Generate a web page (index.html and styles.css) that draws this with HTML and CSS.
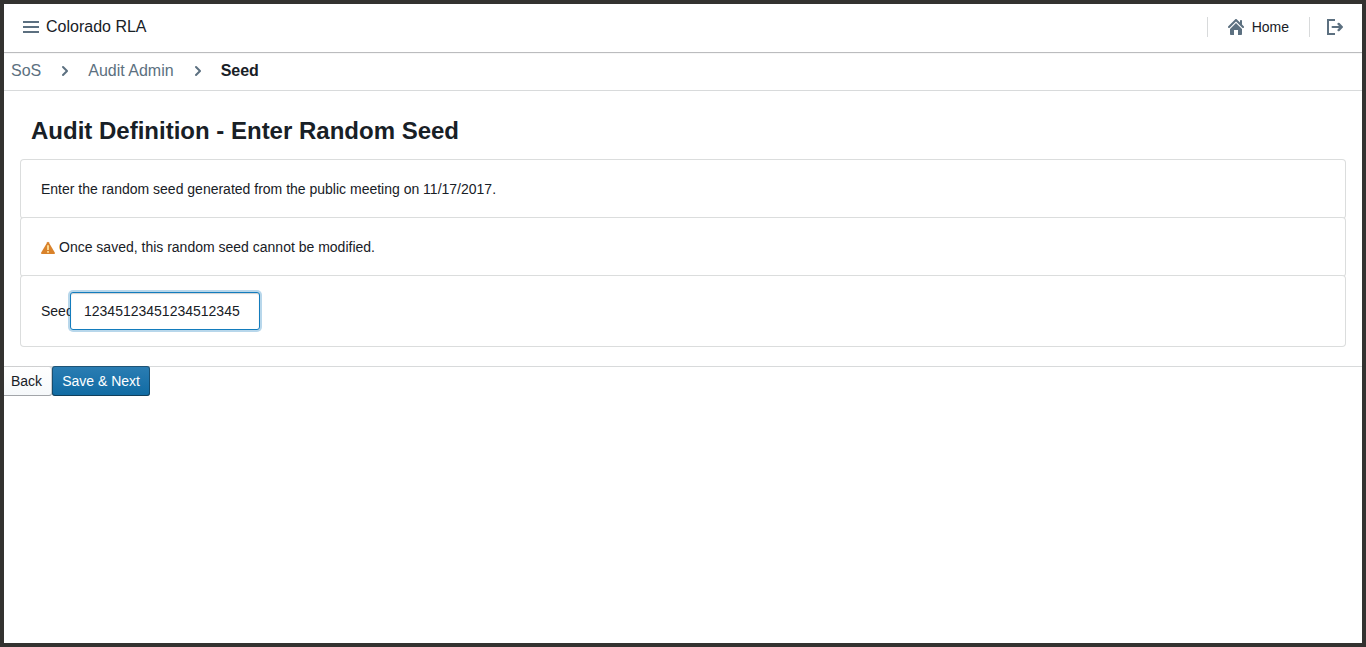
FILE: index.html
```html
<!DOCTYPE html>
<html lang="en">
<head>
<meta charset="utf-8">
<meta name="viewport" content="width=device-width, initial-scale=1">
<title>Colorado RLA</title>
<link rel="stylesheet" href="styles.css">
</head>
<body>
<header class="navbar">
  <div class="navbar-group">
    <button class="icon-button" type="button" aria-label="Menu">
      <svg class="icon" width="16" height="16" viewBox="0 0 16 16" aria-hidden="true"><path d="M0 2h16v2H0zM0 7h16v2H0zM0 12h16v2H0z"/></svg>
    </button>
    <span class="brand">Colorado RLA</span>
  </div>
  <div class="navbar-group">
    <span class="divider"></span>
    <a class="nav-link" href="#">
      <svg class="icon" width="16" height="16" viewBox="0 0 16 16" aria-hidden="true"><path d="M2 10v5c0 .55.45 1 1 1h3v-5h4v5h3c.55 0 1-.45 1-1v-5L8 4l-6 6zm13.71-2.71L14 5.590V2c0-.55-.45-1-1-1s-1 .45-1 1v1.590L8.710.290C8.530.110 8.280 0 8 0s-.53.110-.71.290l-7 7a1.003 1.003 0 0 0 1.420 1.420L8 2.410l6.290 6.290c.18.190.430.300.71.300a1.003 1.003 0 0 0 .71-1.710z"/></svg>
      Home
    </a>
    <span class="divider"></span>
    <button class="icon-button" type="button" aria-label="Log out">
      <svg class="icon" width="16" height="16" viewBox="0 0 16 16" aria-hidden="true"><path d="M0 0h8v2H2v12h6v2H0zM5.500 7h6.500l-1.200-1.200a1.200 1.200 0 0 1 1.700-1.700l3.100 3.100a1.100 1.100 0 0 1 0 1.600l-3.100 3.100a1.200 1.200 0 0 1-1.700-1.700L12 9H5.500a1 1 0 0 1 0-2z"/></svg>
    </button>
  </div>
</header>
<nav aria-label="Breadcrumb">
  <ol class="breadcrumbs">
    <li><a href="#">SoS</a></li>
    <li class="chevron" aria-hidden="true"><svg class="icon" width="16" height="16" viewBox="0 0 16 16"><path d="M10.710 7.290l-4-4a1.003 1.003 0 0 0-1.420 1.420L8.590 8 5.300 11.290c-.19.180-.3.430-.3.710a1.003 1.003 0 0 0 1.710.710l4-4c.18-.18.290-.430.290-.710 0-.28-.11-.53-.29-.71z"/></svg></li>
    <li><a href="#">Audit Admin</a></li>
    <li class="chevron" aria-hidden="true"><svg class="icon" width="16" height="16" viewBox="0 0 16 16"><path d="M10.710 7.290l-4-4a1.003 1.003 0 0 0-1.420 1.420L8.590 8 5.300 11.290c-.19.180-.3.430-.3.710a1.003 1.003 0 0 0 1.710.710l4-4c.18-.18.290-.430.290-.710 0-.28-.11-.53-.29-.71z"/></svg></li>
    <li class="current" aria-current="page">Seed</li>
  </ol>
</nav>
<main class="content">
  <h1>Audit Definition - Enter Random Seed</h1>
  <div class="card">Enter the random seed generated from the public meeting on 11/17/2017.</div>
  <div class="card warning">
    <svg class="warning-icon" width="14" height="14" viewBox="0 0 16 16" aria-hidden="true"><path class="warning-shape" d="M7.200 2.500q.8-1 1.600 0l7.100 12.200q.2 1.300-.9 1.300H1Q-.1 16 .1 14.700z"/><path class="warning-mark" d="M7 6h2v5.500H7zM7 12.500h2v2H7z"/></svg>
    <span>Once saved, this random seed cannot be modified.</span>
  </div>
  <div class="card field">
    <label for="seed">Seed</label>
    <input id="seed" type="text" value="12345123451234512345">
  </div>
</main>
<footer class="actions">
  <button class="button" type="button">Back</button>
  <button class="button primary" type="button">Save &amp; Next</button>
</footer>
<div class="frame"></div>
</body>
</html>
```
FILE: styles.css
```css
* {
  box-sizing: border-box;
}

body {
  margin: 0;
  min-height: 100vh;
  background: #fff;
  color: #182026;
  font: 14px/18px "Liberation Sans", Arial, sans-serif;
}

button,
input {
  margin: 0;
  color: inherit;
  font: inherit;
}

.frame {
  position: fixed;
  inset: 0;
  border: 4px solid #333230;
  pointer-events: none;
}

.icon {
  display: block;
  flex: none;
  fill: #5c7080;
}

.navbar {
  display: flex;
  justify-content: space-between;
  height: 52px;
  padding: 4px 16px 2px;
  box-shadow: 0 0 0 1px rgba(16, 22, 26, 0.1), 0 1px 1px rgba(16, 22, 26, 0.2);
}

.navbar-group {
  display: flex;
  align-items: center;
}

.icon-button {
  padding: 7px;
  border: 0;
  background: none;
}

.brand {
  font-size: 16px;
  line-height: 20px;
}

.divider {
  width: 1px;
  height: 20px;
  background: #d8dadb;
}

.divider:last-of-type {
  margin-right: 10px;
}

.nav-link {
  display: flex;
  align-items: center;
  gap: 8px;
  padding: 0 20px;
  color: inherit;
  text-decoration: none;
}

.breadcrumbs {
  display: flex;
  align-items: center;
  height: 39px;
  margin: 0;
  padding: 0 11px;
  border-bottom: 1px solid #d8dadb;
  font-size: 16px;
  line-height: 20px;
  list-style: none;
}

.breadcrumbs a {
  color: #5c7080;
  text-decoration: none;
}

.chevron {
  margin: 0 15px 0 16px;
}

.current {
  font-weight: bold;
}

.content {
  padding: 24px 21px 20px;
}

h1 {
  margin: 0 10px 13px;
  font-size: 24px;
  line-height: 32px;
}

.card {
  padding: 20px;
  border-radius: 3px;
  background: #fff;
  box-shadow: 0 0 0 1px #dbdddd;
}

.warning {
  display: flex;
  align-items: center;
  gap: 4px;
}

.warning-shape {
  fill: #d9822b;
}

.warning-mark {
  fill: #ffe39f;
}

.field {
  display: flex;
  align-items: center;
  height: 70px;
}

.field label {
  width: 29px;
}

.field input {
  width: 190px;
  height: 38px;
  padding: 0 13px;
  border: 1px solid #137cbd;
  border-radius: 3px;
  outline: 0;
  background: #fff;
  box-shadow: 0 0 0 2px rgba(19, 124, 189, 0.3), inset 0 1px 1px rgba(16, 22, 26, 0.2);
}

.actions {
  display: flex;
  padding-left: 1px;
  box-shadow: inset 0 1px #d8dadb;
}

.button {
  height: 30px;
  padding: 0 10px;
  border: 0;
  border-radius: 3px;
  background: linear-gradient(#fff, #f5f8fa);
  box-shadow: inset 0 0 0 1px rgba(16, 22, 26, 0.2), inset 0 -1px 0 rgba(16, 22, 26, 0.2);
}

.primary {
  background: linear-gradient(#2b7db3, #106ba3);
  box-shadow: inset 0 0 0 1px rgba(16, 22, 26, 0.4), inset 0 -1px 0 rgba(16, 22, 26, 0.2);
  color: #fff;
}
```
